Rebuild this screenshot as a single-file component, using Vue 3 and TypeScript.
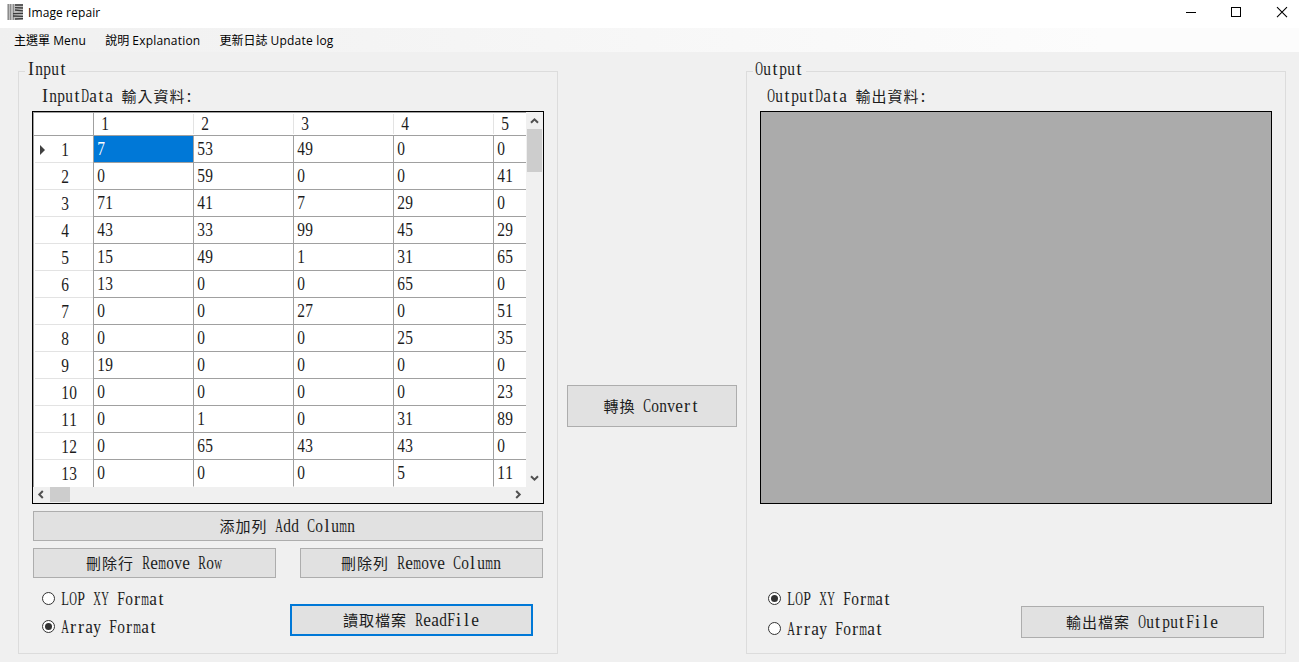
<script setup lang="ts">
import { defineComponent, h, ref } from 'vue'

// Relative advance widths of the serif face, used to fit each letter to a half-width cell.
const advances: Record<string, number> = {
  a: 0.444, b: 0.5, c: 0.444, d: 0.5, e: 0.444, f: 0.333, i: 0.278, l: 0.278, m: 0.778,
  n: 0.5, o: 0.5, p: 0.5, r: 0.333, t: 0.278, u: 0.5, v: 0.5, w: 0.722, y: 0.5,
  A: 0.722, C: 0.667, D: 0.722, F: 0.556, I: 0.333, L: 0.611, O: 0.722, P: 0.556,
  R: 0.667, X: 0.722, Y: 0.722, ':': 0.278,
}

const GridText = defineComponent({
  props: { text: { type: String, required: true } },
  setup(props) {
    return () =>
      h('span', { class: 'grid-text' }, Array.from(props.text).map((c) => {
        if (c.charCodeAt(0) > 0x2e80) return h('span', { class: 'glyph wide' }, c)
        const k = Math.min(1, 7.7 / ((advances[c] ?? 0.5) * 18))
        return h('span', { class: 'glyph', style: { transform: `scaleX(${k.toFixed(3)})` } }, c)
      }))
  },
})

const columns = ['1', '2', '3', '4', '5']
const rows: number[][] = [
  [7, 53, 49, 0, 0],
  [0, 59, 0, 0, 41],
  [71, 41, 7, 29, 0],
  [43, 33, 99, 45, 29],
  [15, 49, 1, 31, 65],
  [13, 0, 0, 65, 0],
  [0, 0, 27, 0, 51],
  [0, 0, 0, 25, 35],
  [19, 0, 0, 0, 0],
  [0, 0, 0, 0, 23],
  [0, 1, 0, 31, 89],
  [0, 65, 43, 43, 0],
  [0, 0, 0, 5, 11],
]
const selected = ref({ row: 0, col: 0 })
const formats = ['LOP XY Format', 'Array Format']
const inputFormat = ref(1)
const outputFormat = ref(0)
const menus = [
  { zh: '主選單', en: 'Menu' },
  { zh: '說明', en: 'Explanation' },
  { zh: '更新日誌', en: 'Update log' },
]
</script>

<template>
  <div class="window">
    <header class="titlebar">
      <svg class="app-icon" width="16" height="16" viewBox="0 0 16 16">
        <rect width="16" height="16" fill="#bdbdbd" />
        <path d="M1.5 0v16M3.5 0v16M6.5 0v16" stroke="#8c8c8c" />
        <path d="M8 1h8M8 3.6l8 .4M8 6l8 .8M6 9.6l10-.2M6 12l10 .3M8 15l8-.4" stroke="#3c3c3c" stroke-width="1.3" />
      </svg>
      <span class="title">Image repair</span>
      <svg class="controls" width="138" height="28" viewBox="0 0 138 28">
        <path d="M25 12.5h10" stroke="#000" />
        <rect x="70.5" y="7.5" width="9" height="9" fill="none" stroke="#000" />
        <path d="M116 7.2l10 10M126 7.2l-10 10" stroke="#000" stroke-width="1.1" />
      </svg>
    </header>
    <nav class="menubar">
      <span v-for="m in menus" :key="m.en" class="menu">{{ m.zh }} <span class="en">{{ m.en }}</span></span>
    </nav>
    <main class="body">
      <section class="group input">
        <div class="legend"><GridText text="Input" /></div>
        <div class="caption"><GridText text="InputData 輸入資料:" /></div>
        <div class="datagrid">
          <div class="viewport">
            <div class="row head">
              <div class="row-head corner"></div>
              <div v-for="c in columns" :key="c" class="col-head"><GridText :text="c" /></div>
            </div>
            <div v-for="(r, i) in rows" :key="i" class="row">
              <div class="row-head">
                <svg v-if="i === selected.row" class="marker" width="5" height="10" viewBox="0 0 5 10"><path d="M0 0l5 5-5 5z" fill="#404040" /></svg>
                <GridText :text="String(i + 1)" />
              </div>
              <div
                v-for="(v, j) in r"
                :key="j"
                class="cell"
                :class="{ active: i === selected.row && j === selected.col }"
                @click="selected = { row: i, col: j }"
              ><GridText :text="String(v)" /></div>
            </div>
          </div>
          <div class="vbar">
            <svg width="15" height="16" viewBox="0 0 15 16"><path d="M4 10.8l3.5-3.5 3.5 3.5" /></svg>
            <div class="vthumb"></div>
            <svg class="end" width="15" height="16" viewBox="0 0 15 16"><path d="M4 5.2l3.5 3.5 3.5-3.5" /></svg>
          </div>
          <div class="hbar">
            <svg width="16" height="15" viewBox="0 0 16 15"><path d="M9.8 4l-3.5 3.5 3.5 3.5" /></svg>
            <div class="hthumb"></div>
            <svg class="end" width="16" height="15" viewBox="0 0 16 15"><path d="M6.2 4l3.5 3.5-3.5 3.5" /></svg>
          </div>
        </div>
        <button class="btn add"><GridText text="添加列 Add Column" /></button>
        <div class="pair">
          <button class="btn"><GridText text="刪除行 Remove Row" /></button>
          <button class="btn"><GridText text="刪除列 Remove Column" /></button>
        </div>
        <div class="footer">
          <div class="radios">
            <div v-for="(f, i) in formats" :key="f" class="radio" @click="inputFormat = i">
              <span class="dot" :class="{ on: inputFormat === i }"></span><GridText :text="f" />
            </div>
          </div>
          <button class="btn focus"><GridText text="讀取檔案 ReadFile" /></button>
        </div>
      </section>
      <div class="middle">
        <button class="btn convert"><GridText text="轉換 Convert" /></button>
      </div>
      <section class="group output">
        <div class="legend"><GridText text="Output" /></div>
        <div class="caption"><GridText text="OutputData 輸出資料:" /></div>
        <div class="canvas"></div>
        <div class="footer">
          <div class="radios">
            <div v-for="(f, i) in formats" :key="f" class="radio" @click="outputFormat = i">
              <span class="dot" :class="{ on: outputFormat === i }"></span><GridText :text="f" />
            </div>
          </div>
          <button class="btn"><GridText text="輸出檔案 OutputFile" /></button>
        </div>
      </section>
    </main>
  </div>
</template>

<style>
body { margin: 0; overflow: hidden; }
.grid-text {
  display: inline-flex;
  height: 20px;
  font: 18px/20px "Liberation Serif", "Noto Sans CJK TC", serif;
  white-space: pre;
}
.grid-text .glyph {
  display: inline-flex;
  flex: none;
  justify-content: center;
  width: 8px;
  height: 20px;
}
.grid-text .wide { width: 16px; font-size: 15px; font-weight: 400; line-height: 22px; }
</style>

<style scoped>
* { box-sizing: border-box; }
.window { width: 1299px; height: 662px; background: #f0f0f0; color: #1c1c1c; overflow: hidden; }
.titlebar { display: flex; height: 28px; background: #fff; padding-left: 7px; color: #000; }
.app-icon { margin-top: 4px; }
.title { margin-left: 5px; font: 12px/26px "Open Sans", "Noto Sans", sans-serif; letter-spacing: 0.1px; }
.controls { margin-left: auto; }
.menubar {
  display: flex;
  height: 24px;
  padding-left: 14px;
  gap: 19px;
  background: linear-gradient(90deg, #f0f0f0, #fcfcfc 85%);
  color: #000;
  font: 12px/25px "Open Sans", "Noto Sans CJK TC", sans-serif;
  white-space: pre;
}
.en { letter-spacing: 0.2px; }
.body { display: flex; height: 610px; padding: 19px 0 0 18px; }
.group { width: 540px; height: 583px; border: 1px solid #dcdcdc; }
.legend { display: flex; width: 44px; height: 20px; margin: -13px 0 0 6px; padding-left: 2px; background: #f0f0f0; }
.output .legend { width: 53px; }
.caption { display: flex; height: 25px; margin: 7px 0 0 22px; }
.output .caption { margin-left: 20px; }
.datagrid {
  display: grid;
  grid-template: 375px 16px / 494px 16px;
  width: 512px;
  height: 393px;
  margin-left: 13px;
  border: 1px solid #000;
  background: #f0f0f0;
}
.viewport { width: 493px; height: 375px; overflow: hidden; background: #fff; border-top: 1px solid #a0a0a0; border-left: 1px solid #a0a0a0; }
.row { display: flex; width: 560px; height: 27px; }
.row.head { height: 23px; border-bottom: 1px solid #a0a0a0; }
.row-head { display: flex; align-items: center; width: 60px; padding: 1px 0 0 27px; border-right: 1px solid #a0a0a0; background: linear-gradient(#e3e3e3, #e3e3e3) 1px 100% / 58px 1px no-repeat; }
.row-head.corner { background: none; }
.marker { margin: 0 16px 0 -21px; }
.col-head { display: flex; width: 100px; padding: 1px 0 0 7px; background: linear-gradient(#e3e3e3, #e3e3e3) 100% 1px / 1px 20px no-repeat; }
.cell { display: flex; align-items: center; width: 100px; padding: 0 0 0 3px; border-right: 1px solid #a0a0a0; border-bottom: 1px solid #a0a0a0; }
.row:last-child .cell { border-bottom-color: #fff; }
.row:last-child .row-head { background: none; }
.cell.active { background: #0078d7; color: #fff; }
.vbar { display: flex; flex-direction: column; width: 15px; height: 375px; }
.vbar svg, .hbar svg { flex: none; fill: none; stroke: #505050; stroke-width: 2; }
.vthumb { height: 43px; margin-top: 1px; background: #cdcdcd; }
.end { margin-top: auto; }
.hbar { display: flex; width: 493px; height: 15px; }
.hthumb { width: 20px; margin-left: 1px; background: #cdcdcd; }
.hbar .end { margin: 0 0 0 auto; }
.btn { display: flex; align-items: center; justify-content: center; width: 243px; height: 30px; padding: 0 2px 0 0; border: 1px solid #adadad; border-radius: 0; background: #e1e1e1; color: #1c1c1c; }
.add { width: 510px; margin: 7px 0 0 14px; }
.pair { display: flex; gap: 24px; margin: 7px 0 0 14px; }
.footer { display: flex; justify-content: space-between; margin: 11px 24px 0 23px; }
.footer .btn { margin-top: 15px; height: 32px; }
.btn.focus { border: 2px solid #0078d7; }
.radios { display: flex; flex-direction: column; gap: 8px; }
.radio { display: flex; }
.dot { display: flex; width: 13px; height: 13px; margin: 3px 6px 0 0; border: 1px solid #333; border-radius: 50%; background: #fff; }
.dot.on::after { content: ""; width: 7px; height: 7px; margin: 2px; border-radius: 50%; background: #333; }
.middle { width: 188px; padding: 314px 0 0 9px; }
.convert { width: 170px; height: 42px; }
.canvas { width: 512px; height: 393px; margin-left: 13px; border: 1px solid #000; background: #ababab; }
.output .footer { margin: 85px 21px 0 21px; }
.output .radios { gap: 10px; }
.output .footer .btn { margin-top: 17px; }
</style>
